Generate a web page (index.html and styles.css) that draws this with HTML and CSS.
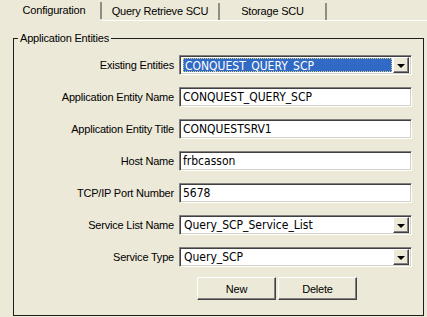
FILE: index.html
```html
<!DOCTYPE html>
<html>
    <head>
        <meta name="viewport" content="width=device-width" />
        <link rel="stylesheet" href="styles.css">
    </head>
    <body>
        <div class="tabs">
            <div class="tab tab-active"><span>Configuration</span></div>
            <div class="tab tab-qr"><span>Query Retrieve SCU</span></div>
            <div class="tab tab-st"><span>Storage SCU</span></div>
            <div class="tab-fill"></div>
        </div>
        <fieldset class="group">
            <legend>Application Entities</legend>
            <div class="form">
                <label>Existing Entities</label>
                <div class="combo combo-focus">
                    <span class="combo-text"><span class="combo-sel">CONQUEST_QUERY_SCP</span></span>
                    <span class="combo-btn"><i></i></span>
                </div>

                <label>Application Entity Name</label>
                <input type="text" value="CONQUEST_QUERY_SCP">

                <label>Application Entity Title</label>
                <input type="text" value="CONQUESTSRV1">

                <label>Host Name</label>
                <input type="text" value="frbcasson">

                <label>TCP/IP Port Number</label>
                <input type="text" value="5678">

                <label>Service List Name</label>
                <div class="combo">
                    <span class="combo-text">Query_SCP_Service_List</span>
                    <span class="combo-btn"><i></i></span>
                </div>

                <label>Service Type</label>
                <div class="combo">
                    <span class="combo-text">Query_SCP</span>
                    <span class="combo-btn"><i></i></span>
                </div>
            </div>
            <div class="actions">
                <button>New</button>
                <button>Delete</button>
            </div>
        </fieldset>
    </body>
</html>
```
FILE: styles.css
```css
/*** xp look ***/
* {box-sizing: border-box;}
html, body {height: 100%;}
body {margin: 0; background-color: #ece9d8; font-family: "Liberation Sans", Arial, sans-serif; font-size: 11px; letter-spacing: -0.2px; color: #000; overflow: hidden;}

/* tab strip */
.tabs {display: flex; height: 21px; padding-left: 8px;}
.tab {height: 21px; padding-top: 3px; border-bottom: 1px solid #fff;}
.tab span {display: block; height: 17px; line-height: 16px; text-align: center; border-right: 2px solid #8f8d84;}
.tab-active {width: 94px; border-bottom-color: transparent; padding-top: 2px;}
.tab-qr {width: 118px;}
.tab-st {width: 107px;}
.tab-fill {flex: 1; border-bottom: 1px solid #fff;}

/* group box */
.group {margin: 11px 3px 0 13px; padding: 10px 0 15px 0; border: 1px solid #1e1e1e; min-width: 0;}
.group legend {margin-left: 4px; padding: 0 2px; line-height: 13px;}

.form {display: grid; grid-template-columns: 160px 233px; column-gap: 5px; row-gap: 12px; align-items: center;}
.form label {text-align: right; line-height: 20px;}

/* edit boxes and combos use the narrow face */
.form input, .combo {height: 20px; border: 1px solid; border-color: #808080 #fff #fff #808080; box-shadow: inset 1px 1px #404040, inset -1px -1px #d4d0c8; background: #fff; font-family: "Liberation Sans Narrow", "DejaVu Sans Condensed", "Liberation Sans", sans-serif; font-size: 12px; font-stretch: condensed; letter-spacing: 0;}
.form input {width: 233px; margin: 0; padding: 0 0 0 3px; color: #000; outline: none;}

.combo {display: flex; align-items: center; padding: 2px;}
.combo-text {flex: 1; padding-left: 2px; line-height: 16px; white-space: nowrap; overflow: hidden;}
.combo-focus .combo-text {padding: 1px; height: 16px; line-height: 14px; display: flex;}
.combo-sel {flex: 1; background: #316ac5; color: #fff; border: 1px dotted #d8cf8a; padding-left: 1px;}
.combo-btn {width: 16px; height: 16px; background: #ece9d8; border: 1px solid; border-color: #fff #404040 #404040 #fff; box-shadow: inset -1px -1px #808080; display: flex; align-items: center; justify-content: center;}
.combo-btn i {width: 0; height: 0; border-left: 4px solid transparent; border-right: 4px solid transparent; border-top: 4px solid #000; margin-top: 1px;}

.actions {display: flex; gap: 2px; padding-left: 183px; margin-top: 10px;}
.actions button {width: 79px; height: 23px; margin: 0; padding: 0; font: inherit; letter-spacing: inherit; color: #000; background: #ece9d8; border: 1px solid; border-color: #fff #404040 #404040 #fff; box-shadow: inset -1px -1px #808080;}
```
